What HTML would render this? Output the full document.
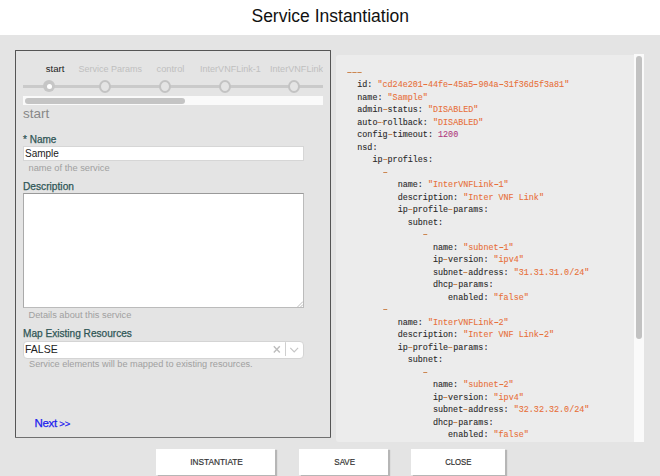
<!DOCTYPE html>
<html><head><meta charset="utf-8">
<style>
*{margin:0;padding:0;box-sizing:border-box}
html,body{width:660px;height:476px;overflow:hidden;background:#e4e4e4;font-family:"Liberation Sans",sans-serif}
.a{position:absolute;white-space:pre}
#top{position:absolute;left:0;top:0;width:660px;height:35px;background:#fff}
#title{left:0;width:660px;text-align:center;top:5.8px;font-size:17.5px;line-height:20px;color:#111;padding-left:0.5px}
#panel{position:absolute;left:15px;top:50px;width:316px;height:387.5px;border:1.5px solid #555;border-bottom-color:#707070;border-radius:1px}
.lbl{font-size:9px;line-height:10px;color:#bfbfbf;top:64.2px}
.track{position:absolute;height:3px;background:#cacaca;top:85px}
.circ{position:absolute;width:12px;height:13px;border-radius:50%;border:2.1px solid #c3c3c3;top:79.7px}
#hs{position:absolute;left:23px;top:96px;width:300px;height:9px;background:#fafafa}
#hthumb{position:absolute;left:25px;top:98px;width:160px;height:6px;border-radius:3px;background:#c4c4c4}
.flbl{font-size:10px;line-height:11px;color:#2f5656;-webkit-text-stroke:0.25px #2f5656}
.help{font-size:9px;line-height:10px;color:#a0a0a0}
#name{position:absolute;left:23px;top:146px;width:281px;height:15px;background:#fff;border:1px solid #d6d6d6}
#desc{position:absolute;left:23px;top:193px;width:281px;height:115px;background:#fff;border:1px solid #bbb;border-top-color:#999;border-left-color:#aaa}
#sel{position:absolute;left:23px;top:340.5px;width:280.5px;height:18px;background:#fff;border:1px solid #d4d4d4;border-radius:4px}
#code{position:absolute;left:336px;top:55px;width:298px;height:386.5px;background:#ececec;border-radius:3px 0 0 3px}
#vtrack{position:absolute;left:634px;top:54px;width:10px;height:387.5px;background:#fafafa}
#vthumb{position:absolute;left:636px;top:56px;width:6px;height:283px;border-radius:3px;background:#c2c2c2}
pre{position:absolute;left:347.2px;top:66.5px;font-family:"Liberation Mono",monospace;font-size:8.42px;line-height:12.5px;color:#2a2a2a;-webkit-text-stroke:0.1px}
.s{color:#e8703a}.n{color:#b03a7e}.h{color:transparent;-webkit-text-stroke:0;background:linear-gradient(90deg,#cc8650 0,#cc8650 4.4px,transparent 4.4px) repeat-x 0.3px 4.3px/5.052px 1.1px}.s .h{background-image:linear-gradient(90deg,#e8703a 0,#e8703a 4.4px,transparent 4.4px)}
.btn{position:absolute;top:448.5px;height:26.5px;background:#fff;box-shadow:2px 1px 1px rgba(0,0,0,.2);font-size:9px;line-height:27px;text-align:center;color:#333;font-weight:400;-webkit-text-stroke:0.2px #333}
</style></head><body>
<div id="top"></div>
<div class="a" id="title">Service Instantiation</div>
<div id="panel"></div>

<div class="a lbl" style="left:45.8px;color:#222;font-size:9.6px;top:63.8px">start</div>
<div class="a lbl" style="left:78.6px">Service Params</div>
<div class="a lbl" style="left:156.5px;font-size:9.3px">control</div>
<div class="a lbl" style="left:200px;font-size:9.05px">InterVNFLink-1</div>
<div class="a lbl" style="left:270px;width:53px;overflow:hidden;font-size:9.1px">InterVNFLink-2</div>

<div class="track" style="left:23px;width:300px"></div>
<div class="circ" style="left:43px;width:12px;height:12px;background:#c6c6c6;border:none"></div>
<div style="position:absolute;left:46.6px;top:83.8px;width:5px;height:5px;border-radius:50%;background:#fff"></div>
<div class="circ" style="left:98.6px;background:#e4e4e4"></div>
<div class="circ" style="left:158.6px;background:#e4e4e4"></div>
<div class="circ" style="left:218.6px;background:#e4e4e4"></div>
<div class="circ" style="left:288.2px;background:#e4e4e4"></div>

<div id="hs"></div><div id="hthumb"></div>

<div class="a" style="left:23px;top:106.7px;font-size:13.5px;line-height:14px;color:#888">start</div>

<div class="a flbl" style="left:23px;top:133.5px">* Name</div>
<div id="name"></div>
<div class="a" style="left:25px;top:148.2px;font-size:10px;line-height:11px;color:#222">Sample</div>
<div class="a help" style="left:28.5px;top:163px;font-size:9.3px">name of the service</div>

<div class="a flbl" style="left:23px;top:181px;font-size:10.2px">Description</div>
<div id="desc"></div>
<svg style="position:absolute;left:296px;top:300px" width="8" height="8"><path d="M1.5 7 L7 1.5 M4.5 7 L7 4.5" stroke="#aaa" stroke-width="0.8"/></svg>
<div class="a help" style="left:28.5px;top:310px;font-size:9.25px">Details about this service</div>

<div class="a flbl" style="left:23px;top:328px;font-size:10.1px">Map Existing Resources</div>
<div id="sel"></div>
<div class="a" style="left:25px;top:343px;font-size:10.5px;line-height:12px;color:#222">FALSE</div>
<svg style="position:absolute;left:272px;top:341px" width="30" height="17">
<path d="M1.8 5.2 L7.8 11.5 M7.8 5.2 L1.8 11.5" stroke="#bdbdbd" stroke-width="1.4" fill="none"/>
<path d="M13.5 1.2 V15" stroke="#cfcfcf" stroke-width="1" fill="none"/>
<path d="M18.3 6.8 L22.2 10.8 L26.1 6.8" stroke="#c6c6c6" stroke-width="1.2" fill="none"/>
</svg>
<div class="a help" style="left:29px;top:359px;font-size:9.2px">Service elements will be mapped to existing resources.</div>

<div class="a" style="left:34.5px;top:417px;font-size:11.5px;line-height:13px;color:#2020ee;letter-spacing:-0.3px;-webkit-text-stroke:0.25px #2020ee">Next</div><div class="a" style="left:59.3px;top:417.3px;font-size:9.5px;line-height:13px;color:#2020ee;letter-spacing:-0.2px;-webkit-text-stroke:0.25px #2020ee">&gt;&gt;</div>

<div id="code"></div>
<div id="vtrack"></div><div id="vthumb"></div>
<pre><span class="h">---</span>
  id: <span class="s">"cd24e201<span class="h">-</span>44fe<span class="h">-</span>45a5<span class="h">-</span>904a<span class="h">-</span>31f36d5f3a81"</span>
  name: <span class="s">"Sample"</span>
  admin<span class="h">-</span>status: <span class="s">"DISABLED"</span>
  auto<span class="h">-</span>rollback: <span class="s">"DISABLED"</span>
  config<span class="h">-</span>timeout: <span class="n">1200</span>
  nsd:
     ip<span class="h">-</span>profiles:
       <span class="h">-</span>
          name: <span class="s">"InterVNFLink<span class="h">-</span>1"</span>
          description: <span class="s">"Inter VNF Link"</span>
          ip<span class="h">-</span>profile<span class="h">-</span>params:
            subnet:
               <span class="h">-</span>
                 name: <span class="s">"subnet<span class="h">-</span>1"</span>
                 ip<span class="h">-</span>version: <span class="s">"ipv4"</span>
                 subnet<span class="h">-</span>address: <span class="s">"31.31.31.0/24"</span>
                 dhcp<span class="h">-</span>params:
                    enabled: <span class="s">"false"</span>
       <span class="h">-</span>
          name: <span class="s">"InterVNFLink<span class="h">-</span>2"</span>
          description: <span class="s">"Inter VNF Link<span class="h">-</span>2"</span>
          ip<span class="h">-</span>profile<span class="h">-</span>params:
            subnet:
               <span class="h">-</span>
                 name: <span class="s">"subnet<span class="h">-</span>2"</span>
                 ip<span class="h">-</span>version: <span class="s">"ipv4"</span>
                 subnet<span class="h">-</span>address: <span class="s">"32.32.32.0/24"</span>
                 dhcp<span class="h">-</span>params:
                    enabled: <span class="s">"false"</span></pre>

<div class="btn" style="left:156px;width:119px"><span style="display:inline-block;transform:scaleX(.92);margin-left:3px">INSTANTIATE</span></div>
<div class="btn" style="left:299px;width:89px"><span style="display:inline-block;transform:scaleX(.89);margin-left:1.5px">SAVE</span></div>
<div class="btn" style="left:411px;width:94px"><span style="display:inline-block;transform:scaleX(.86)">CLOSE</span></div>
</body></html>
